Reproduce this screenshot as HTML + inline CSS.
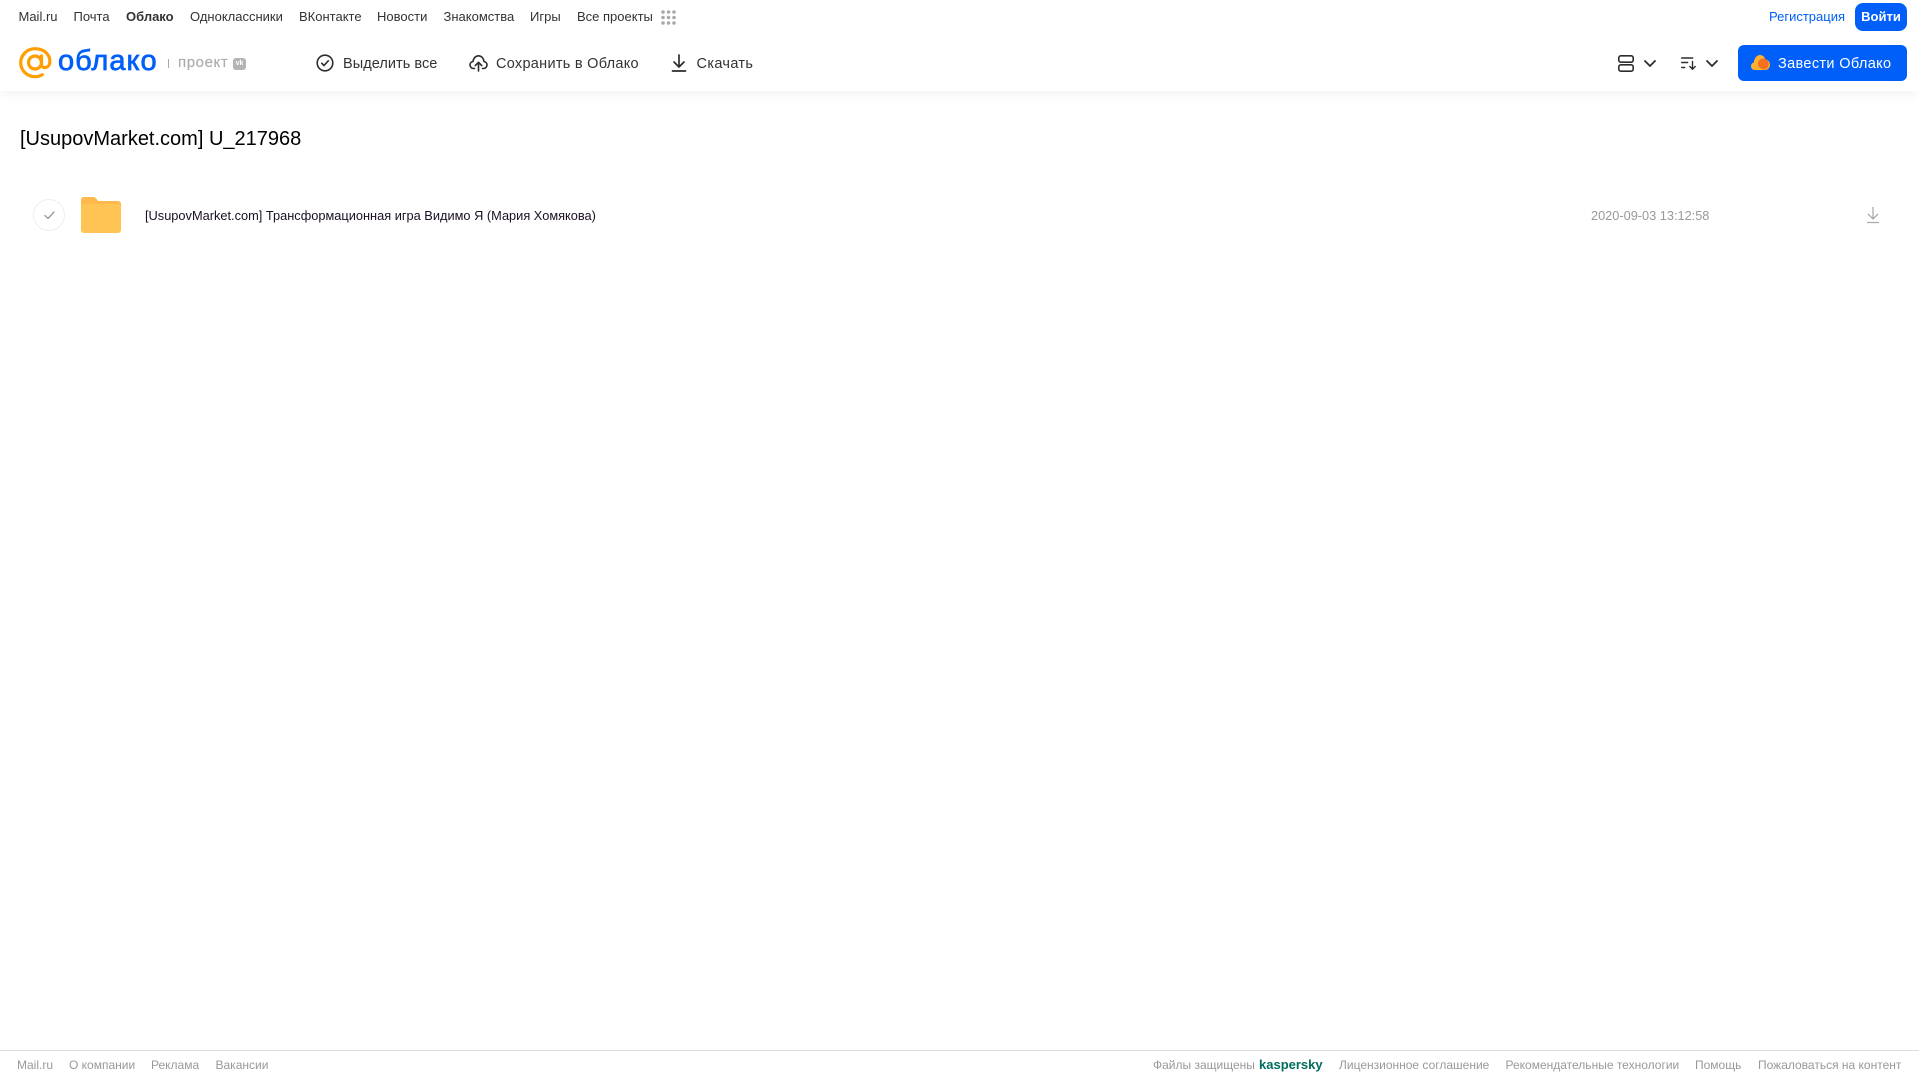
<!DOCTYPE html>
<html lang="ru"><head><meta charset="utf-8"><title>Облако</title>
<style>
html,body{margin:0;padding:0;width:1919px;height:1079px;overflow:hidden;background:#fff;font-family:"Liberation Sans",sans-serif}
.t{position:absolute;white-space:nowrap;line-height:16px}
.n{top:9px;font-size:13px;color:#333}
.b{top:55.500px;font-size:14.500px;color:#333}
.f{top:1057px;font-size:12px;color:#999}
svg{position:absolute;overflow:visible}
</style></head><body>
<div style="position:absolute;left:0;top:0;width:1919px;height:91px;background:#fff;box-shadow:0 1px 14px rgba(0,0,0,.07)"></div>

<span class="t n" style="left:18.500px">Mail.ru</span>
<span class="t n" style="left:73.500px">Почта</span>
<span class="t n" style="left:126px;font-weight:700">Облако</span>
<span class="t n" style="left:190px">Одноклассники</span>
<span class="t n" style="left:299px">ВКонтакте</span>
<span class="t n" style="left:377px">Новости</span>
<span class="t n" style="left:443.500px">Знакомства</span>
<span class="t n" style="left:530px">Игры</span>
<span class="t n" style="left:577px">Все проекты</span>
<svg style="left:661px;top:10px" width="15" height="15" fill="#aaa"><circle cx="2" cy="2" r="1.800"/><circle cx="7.500" cy="2" r="1.800"/><circle cx="13" cy="2" r="1.800"/><circle cx="2" cy="7.500" r="1.800"/><circle cx="7.500" cy="7.500" r="1.800"/><circle cx="13" cy="7.500" r="1.800"/><circle cx="2" cy="13" r="1.800"/><circle cx="7.500" cy="13" r="1.800"/><circle cx="13" cy="13" r="1.800"/></svg>

<span class="t n" style="left:1769px;color:#005ff9">Регистрация</span>
<div style="position:absolute;left:1855px;top:3px;width:52px;height:28px;background:#005ff9;border-radius:8px;color:#fff;font-size:13px;font-weight:700;line-height:27px;text-align:center">Войти</div>

<!-- logo -->
<svg style="left:19px;top:47px" width="33" height="32" viewBox="0 0 33 32" fill="none" stroke="#ff9e00"><circle cx="16" cy="15.500" r="6.500" stroke-width="3.200"/><path d="M22.500 9v8.500c0 4.600 7.700 4.200 8.300-2C31.500 7 24.500 1.700 16 1.700 8.200 1.700 1.700 8 1.700 15.700S8.200 29.700 16 29.700c3 0 5.300-.7 7.300-2" stroke-width="3.200" stroke-linecap="round"/></svg>
<span class="t" style="left:58px;top:44px;line-height:34px;font-size:29px;color:#005ff9;letter-spacing:1px;-webkit-text-stroke:.7px #005ff9">облако</span>
<div style="position:absolute;left:168px;top:59px;width:1px;height:9px;background:#aaa"></div>
<span class="t" style="left:178px;top:55px;font-size:15px;color:#adadad;letter-spacing:.6px;-webkit-text-stroke:.2px #adadad">проект</span>
<div style="position:absolute;left:233px;top:58px;width:13px;height:12px;background:#b4b4b4;border-radius:3px;color:#fff;font-size:7px;font-weight:700;line-height:12px;text-align:center">vk</div>

<!-- toolbar -->
<svg style="left:316px;top:54px" width="18" height="18" viewBox="0 0 18 18" fill="none" stroke="#2c2d2e" stroke-width="1.600"><circle cx="9" cy="9" r="7.800"/><path d="M5.700 9.200l2.300 2.300 4.300-4.700" stroke-linecap="round" stroke-linejoin="round"/></svg>
<span class="t b" style="left:343px;letter-spacing:.05px">Выделить все</span>
<svg style="left:469px;top:54px" width="19" height="18" viewBox="0 0 19 18" fill="none" stroke="#2c2d2e" stroke-width="1.600" stroke-linecap="round" stroke-linejoin="round"><path d="M5.500 14.500H4.600C2.500 14.500 1 12.900 1 11c0-1.800 1.300-3.200 3-3.500C4.500 4 6.800 1.800 9.500 1.800c2.800 0 5 2.200 5.500 5.700 1.800.3 3 1.700 3 3.500 0 1.900-1.500 3.500-3.600 3.500h-.9"/><path d="M9.500 17V8.500M6.300 11.500l3.200-3.200 3.200 3.200"/></svg>
<span class="t b" style="left:496px;letter-spacing:.28px">Сохранить в Облако</span>
<svg style="left:671px;top:54px" width="16" height="18" viewBox="0 0 16 18" fill="none" stroke="#2c2d2e" stroke-width="1.700" stroke-linecap="round" stroke-linejoin="round"><path d="M8 1v11.500M3 8l5 5 5-5M1.500 17h13"/></svg>
<span class="t b" style="left:696.500px;letter-spacing:.35px">Скачать</span>

<svg style="left:1618px;top:55px" width="16" height="17" viewBox="0 0 16 17" fill="none" stroke="#2c2d2e" stroke-width="1.600"><rect x=".8" y=".8" width="14.400" height="6.400" rx="2"/><rect x=".8" y="9.800" width="14.400" height="6.400" rx="2"/></svg>
<svg style="left:1644px;top:60px" width="12" height="7" viewBox="0 0 12 7" fill="none" stroke="#2c2d2e" stroke-width="1.800" stroke-linecap="round" stroke-linejoin="round"><path d="M1 1l5 5 5-5"/></svg>
<svg style="left:1681px;top:57px" width="16" height="13" viewBox="0 0 16 13" fill="none" stroke="#2c2d2e" stroke-width="1.400" stroke-linecap="round" stroke-linejoin="round"><path d="M.7 1h11M.7 5.500h6M.7 10.500h3M11.500 4.500v7.500M8.800 9.500l2.700 2.700 2.700-2.700"/></svg>
<svg style="left:1706px;top:60px" width="12" height="7" viewBox="0 0 12 7" fill="none" stroke="#2c2d2e" stroke-width="1.800" stroke-linecap="round" stroke-linejoin="round"><path d="M1 1l5 5 5-5"/></svg>

<div style="position:absolute;left:1738px;top:45px;width:169px;height:36px;background:#005ff9;border-radius:6px"></div>
<svg style="left:1751px;top:55px" width="19" height="15" viewBox="0 0 19 15"><path d="M4 15C1.800 15 0 13.300 0 11.200 0 9.500 1.100 8 2.800 7.500 3.300 3.300 5.700 0 9 0c2.600 0 4.700 1.900 5.300 4.500 2.700.2 4.700 2.500 4.700 5.200 0 3-2.300 5.300-5 5.300z" fill="#ffb02e"/><path d="M7 9c0-3 2.300-5.500 5.300-5.500 2 0 3.600 1 4.500 2.500.7 1 .9 2.100.9 3.300 0 2.500-1.700 4.700-4.200 5.200C10 14 7 12 7 9z" fill="#f4701f"/></svg>
<span class="t" style="left:1778px;top:55.500px;font-size:14.500px;color:#fff;letter-spacing:.35px">Завести Облако</span>

<!-- content -->
<span class="t" style="left:20px;top:127px;line-height:24px;font-size:20px;color:#000">[UsupovMarket.com] U_217968</span>

<div style="position:absolute;left:33px;top:199px;width:30px;height:30px;border:1px solid #eee;border-radius:50%"></div>
<svg style="left:43.500px;top:211px" width="11" height="9" viewBox="0 0 11 9" fill="none" stroke="#999" stroke-width="1.300" stroke-linecap="round" stroke-linejoin="round"><path d="M1 4.500l3 3 6-6.500"/></svg>
<svg style="left:81px;top:197px" width="40" height="36" viewBox="0 0 40 36"><path d="M0 3a3 3 0 0 1 3-3h9c2 0 3 1 4 2.500L17 4h20a3 3 0 0 1 3 3v4H0z" fill="#ffb94d"/><path d="M0 7h37a3 3 0 0 1 3 3v23a3 3 0 0 1-3 3H3a3 3 0 0 1-3-3z" fill="#ffc453"/></svg>
<span class="t" style="left:145px;top:208px;font-size:12.800px;color:#1a0f24">[UsupovMarket.com] Трансформационная игра Видимо Я (Мария Хомякова)</span>
<span class="t" style="left:1591px;top:208px;font-size:12.750px;color:#999">2020-09-03 13:12:58</span>
<svg style="left:1866px;top:207px" width="14" height="17" viewBox="0 0 14 17" fill="none" stroke="#aaa" stroke-width="1.300"><path d="M7 0v11.500M2 7l5 5 5-5M1 15.500h12"/></svg>

<!-- footer -->
<div style="position:absolute;left:0;top:1050px;width:1919px;height:1px;background:#ddd"></div>
<span class="t f" style="left:17px">Mail.ru</span>
<span class="t f" style="left:69px">О компании</span>
<span class="t f" style="left:151px">Реклама</span>
<span class="t f" style="left:215.500px">Вакансии</span>
<span class="t f" style="left:1153px">Файлы защищены</span>
<span class="t f" style="left:1259px;top:1057px;font-size:13px;font-weight:700;color:#006d5c">kaspersky</span>
<span class="t f" style="left:1339px">Лицензионное соглашение</span>
<span class="t f" style="left:1505.500px">Рекомендательные технологии</span>
<span class="t f" style="left:1695px">Помощь</span>
<span class="t f" style="left:1758px">Пожаловаться на контент</span>
</body></html>
